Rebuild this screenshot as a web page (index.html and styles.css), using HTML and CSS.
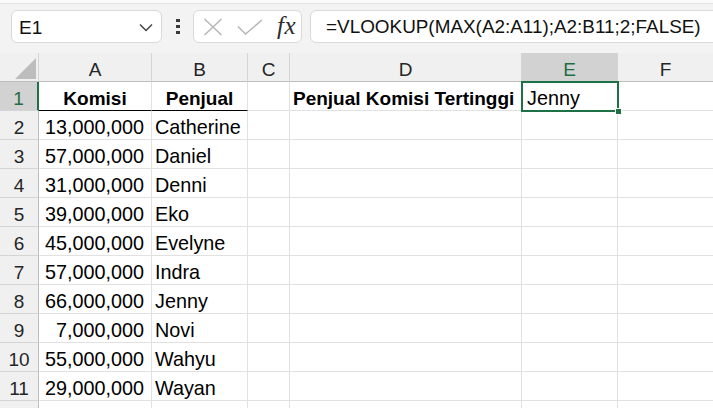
FILE: index.html
```html
<!DOCTYPE html>
<html lang="id">
<head>
<meta charset="utf-8">
<title>Excel - VLOOKUP MAX</title>
<link rel="stylesheet" href="styles.css">
</head>
<body>
<div class="app">
  <div class="toolbar">
    <div class="namebox">
      <span class="namebox-text">E1</span>
      <svg class="chevron" width="14" height="9" viewBox="0 0 14 9"><path d="M1 1.5 L7 7.5 L13 1.5" fill="none" stroke="#444" stroke-width="1.5"/></svg>
    </div>
    <div class="dots"><span></span><span></span><span></span></div>
    <div class="fxbox">
      <svg class="icon-x" width="20" height="18" viewBox="0 0 20 18"><path d="M1.5 1 L18.5 17 M18.5 1 L1.5 17" fill="none" stroke="#b4b4b4" stroke-width="1.4"/></svg>
      <svg class="icon-check" width="26" height="16" viewBox="0 0 26 16"><path d="M1 7.5 L8.5 15 L25 1" fill="none" stroke="#b4b4b4" stroke-width="1.4"/></svg>
      <span class="fx">fx</span>
    </div>
    <div class="formula">=VLOOKUP(MAX(A2:A11);A2:B11;2;FALSE)</div>
  </div>

  <div class="sheet">
    <div class="row header-row">
      <div class="corner"><span class="tri"></span></div>
      <div class="colhead">A</div>
      <div class="colhead">B</div>
      <div class="colhead">C</div>
      <div class="colhead">D</div>
      <div class="colhead active">E</div>
      <div class="colhead">F</div>
    </div>
    <div class="row">
      <div class="rowhead active">1</div>
      <div class="cell bold center underline">Komisi</div>
      <div class="cell bold center underline">Penjual</div>
      <div class="cell"></div>
      <div class="cell bold">Penjual Komisi Tertinggi</div>
      <div class="cell selected">Jenny<span class="handle"></span></div>
      <div class="cell"></div>
    </div>
    <div class="row"><div class="rowhead">2</div><div class="cell num">13,000,000</div><div class="cell">Catherine</div><div class="cell"></div><div class="cell"></div><div class="cell"></div><div class="cell"></div></div>
    <div class="row"><div class="rowhead">3</div><div class="cell num">57,000,000</div><div class="cell">Daniel</div><div class="cell"></div><div class="cell"></div><div class="cell"></div><div class="cell"></div></div>
    <div class="row"><div class="rowhead">4</div><div class="cell num">31,000,000</div><div class="cell">Denni</div><div class="cell"></div><div class="cell"></div><div class="cell"></div><div class="cell"></div></div>
    <div class="row"><div class="rowhead">5</div><div class="cell num">39,000,000</div><div class="cell">Eko</div><div class="cell"></div><div class="cell"></div><div class="cell"></div><div class="cell"></div></div>
    <div class="row"><div class="rowhead">6</div><div class="cell num">45,000,000</div><div class="cell">Evelyne</div><div class="cell"></div><div class="cell"></div><div class="cell"></div><div class="cell"></div></div>
    <div class="row"><div class="rowhead">7</div><div class="cell num">57,000,000</div><div class="cell">Indra</div><div class="cell"></div><div class="cell"></div><div class="cell"></div><div class="cell"></div></div>
    <div class="row"><div class="rowhead">8</div><div class="cell num">66,000,000</div><div class="cell">Jenny</div><div class="cell"></div><div class="cell"></div><div class="cell"></div><div class="cell"></div></div>
    <div class="row"><div class="rowhead">9</div><div class="cell num">7,000,000</div><div class="cell">Novi</div><div class="cell"></div><div class="cell"></div><div class="cell"></div><div class="cell"></div></div>
    <div class="row"><div class="rowhead">10</div><div class="cell num">55,000,000</div><div class="cell">Wahyu</div><div class="cell"></div><div class="cell"></div><div class="cell"></div><div class="cell"></div></div>
    <div class="row"><div class="rowhead">11</div><div class="cell num">29,000,000</div><div class="cell">Wayan</div><div class="cell"></div><div class="cell"></div><div class="cell"></div><div class="cell"></div></div>
    <div class="row"><div class="rowhead"></div><div class="cell"></div><div class="cell"></div><div class="cell"></div><div class="cell"></div><div class="cell"></div><div class="cell"></div></div>
  </div>
</div>
</body>
</html>
```

FILE: styles.css
```css
* { box-sizing: border-box; }

html, body {
  margin: 0;
  padding: 0;
}

body {
  width: 713px;
  height: 408px;
  overflow: hidden;
  background: #ffffff;
  font-family: "Liberation Sans", Arial, sans-serif;
  color: #000;
}

.app {
  width: 713px;
  height: 408px;
  overflow: hidden;
}

/* ---------- formula bar ---------- */
.toolbar {
  height: 53px;
  background: #f3f3f3;
  border-top: 3px solid #fafafa;
  box-shadow: inset 0 1px 0 #e4e4e4;
  display: flex;
  align-items: flex-start;
  padding-top: 7px;
  padding-left: 11px;
}

.namebox {
  width: 151px;
  height: 33px;
  background: #fff;
  border: 1px solid #d9d9d9;
  border-radius: 6px;
  display: flex;
  align-items: center;
  justify-content: space-between;
  padding: 0 8px 0 7px;
}

.namebox-text {
  font-size: 19px;
  color: #111;
  line-height: 1;
  padding-top: 1px;
}

.chevron { margin-top: 2px; }

.dots {
  width: 31px;
  height: 33px;
  display: flex;
  flex-direction: column;
  align-items: center;
  justify-content: center;
  gap: 3px;
}

.dots span {
  width: 4px;
  height: 3px;
  background: #3a3a3a;
  display: block;
}

.fxbox {
  width: 109px;
  height: 33px;
  background: #fff;
  border: 1px solid #d9d9d9;
  border-radius: 6px;
  display: flex;
  align-items: center;
  padding-left: 9px;
}

.icon-x { margin-right: 14px; }
.icon-check { margin-right: 14px; margin-top: 1px; }

.fx {
  font-family: "Liberation Serif", "Times New Roman", serif;
  font-style: italic;
  font-size: 25px;
  color: #2b2b2b;
  line-height: 1;
  margin-top: -2px;
  letter-spacing: 0.5px;
}

.formula {
  flex: 1;
  margin-left: 8px;
  margin-right: -20px;
  height: 33px;
  background: #fff;
  border: 1px solid #d9d9d9;
  border-radius: 6px;
  font-size: 18.9px;
  color: #111;
  padding-left: 15px;
  line-height: 31px;
  white-space: nowrap;
}

/* ---------- sheet ---------- */
.sheet {
  background: #fff;
}

.row {
  display: grid;
  grid-template-columns: 39px 113px 96px 42px 232px 96px 96px;
  height: 29px;
}

.cell, .colhead, .rowhead, .corner {
  height: 29px;
  border-right: 1px solid #e1e1e1;
  border-bottom: 1px solid #e1e1e1;
  padding: 5px 3px 0 3px;
  line-height: 23px;
  font-size: 19.8px;
  white-space: nowrap;
}

.header-row .colhead,
.header-row .corner {
  background: #f0f0f0;
  border-right: 1px solid #d4d4d4;
  border-bottom: 1px solid #bdbdbd;
  text-align: center;
  color: #262626;
  font-size: 19px;
}

.corner {
  position: relative;
}

.tri {
  position: absolute;
  left: 15px;
  top: 5px;
  width: 21px;
  height: 21px;
  background: #bdbdbd;
  clip-path: polygon(100% 0, 100% 100%, 0 100%);
}

.colhead.active {
  background: #d2d2d2;
  color: #1e6e42;
  border-bottom: 1px solid #1e7145;
}

.rowhead {
  background: #f0f0f0;
  border-right: 1px solid #bdbdbd;
  border-bottom: 1px solid #d4d4d4;
  text-align: center;
  color: #262626;
  padding-left: 0;
  padding-right: 0;
  font-size: 19px;
}

.rowhead.active {
  background: #d2d2d2;
  color: #1e6e42;
  border-right: 2px solid #1e7145;
}

.bold { font-weight: bold; font-size: 19px; }
.center { text-align: center; }
.num { text-align: right; padding-right: 7px; }

.underline {
  border-bottom: 1px solid #000;
}

.selected {
  position: relative;
  padding-left: 5px;
}

.selected::after {
  content: "";
  position: absolute;
  left: -1px;
  top: -1px;
  right: -2px;
  bottom: -2px;
  border: 2px solid #1e7145;
  pointer-events: none;
}

.handle {
  position: absolute;
  right: -5px;
  bottom: -5px;
  width: 7px;
  height: 7px;
  background: #1e7145;
  border: 1px solid #fff;
  z-index: 2;
}
```
